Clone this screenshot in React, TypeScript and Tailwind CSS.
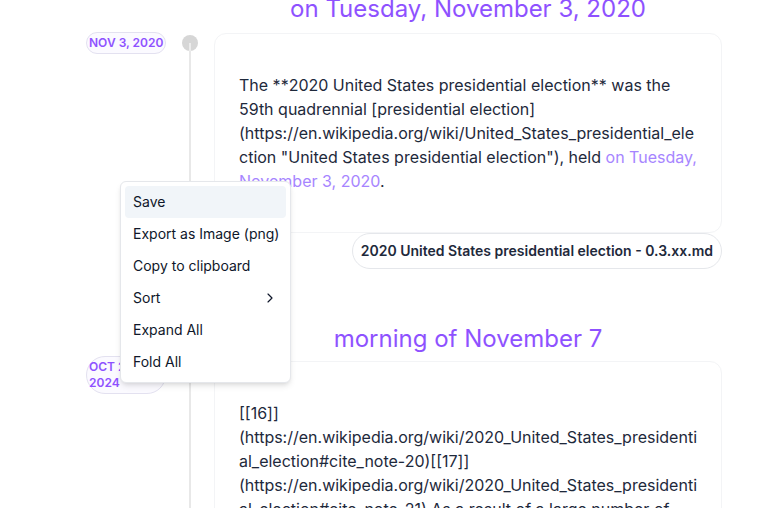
import React from "react";
import { ChevronRight } from "lucide-react";

const font = { fontFamily: "Inter, 'Noto Sans', sans-serif" };

const DateBadge = ({ label, nowrap, className = "" }: { label: string; nowrap?: boolean; className?: string }) => (
  <span
    className={`self-start rounded-full border border-[#e3e1f0] bg-[#fbfaff] px-[2px] py-0.5 text-xs leading-4 font-semibold text-violet-500 ${nowrap ? "whitespace-nowrap" : ""} ${className}`}
  >
    {label}
  </span>
);

const Dot = () => (
  <div className="flex flex-col items-center h-full">
    <div className="mt-[2px] w-4 h-4 rounded-full bg-[#d6d6d6] flex flex-col items-center">
      <div className="h-2" />
      <div className="w-0.5 h-2 bg-[#ececec]" />
    </div>
    <div className="flex-1 w-0.5 bg-[#e8e8e8]" />
  </div>
);

const Line = () => (
  <div className="flex justify-center h-full">
    <div className="w-0.5 h-full bg-[#e8e8e8]" />
  </div>
);

const menuItems = ["Save", "Export as Image (png)", "Copy to clipboard", "Sort", "Expand All", "Fold All"];

export default function App() {
  return (
    <div className="relative w-full h-[508px] overflow-hidden bg-white" style={font}>
      <div className="pl-[86px] pr-[45px] grid grid-cols-[80px_48px_minmax(0,1fr)]">
        {/* section 1 heading */}
        <div />
        <div />
        <h2 className="-mt-[7px] text-center text-2xl leading-8 text-violet-500">
          on Tuesday, November 3, 2020
        </h2>

        {/* entry 1 */}
        <div className="flex flex-col pt-2">
          <DateBadge label="NOV 3, 2020" nowrap className="-mt-px" />
        </div>
        <div className="pt-2 flex flex-col">
          <Dot />
        </div>
        <div className="pt-2 flex flex-col min-w-0">
          <div className="rounded-xl border border-[#f3f4f6] px-6 py-[39px] text-base leading-6 text-[#1e293b] break-words">
            The **2020 United States presidential election** was the 59th quadrennial [presidential election](https://en.wikipedia.org/wiki/United_States_presidential_election "United States presidential election"), held{" "}
            <span className="text-violet-400">on Tuesday, November 3, 2020</span>.
          </div>
          <span className="self-end h-9 flex items-center rounded-full border border-[#e5e7eb] px-2 text-sm font-semibold text-[#1e293b] whitespace-nowrap">
            2020 United States presidential election - 0.3.xx.md
          </span>
        </div>

        {/* section 2 heading */}
        <div />
        <Line />
        <h2 className="pt-[54px] pb-[6px] text-center text-2xl leading-8 text-violet-500">
          morning of November 7
        </h2>

        {/* entry 2 */}
        <div className="flex flex-col">
          <DateBadge label="OCT 28, 2024" className="-mt-[5px]" />
        </div>
        <div className="flex flex-col">
          <Dot />
        </div>
        <div className="flex flex-col min-w-0">
          <div className="rounded-xl border border-[#f3f4f6] px-6 py-[39px] text-base leading-6 text-[#1e293b] break-words">
            [[16]](https://en.wikipedia.org/wiki/2020_United_States_presidential_election#cite_note-20)[[17]](https://en.wikipedia.org/wiki/2020_United_States_presidential_election#cite_note-21) As a result of a large number of mail-in ballots, the counting process took several days.
          </div>
        </div>
      </div>

      {/* context menu */}
      <div className="absolute left-[120px] top-[181px] w-[171px] rounded-md border border-[#e5e7eb] bg-white p-1 shadow-md">
        {menuItems.map((item, i) => (
          <div
            key={item}
            className={`h-8 flex items-center justify-between rounded px-2 text-sm whitespace-nowrap text-[#0f172a] ${i === 0 ? "bg-[#f1f5f9]" : ""}`}
          >
            <span>{item}</span>
            {item === "Sort" && <ChevronRight size={16} strokeWidth={1.75} />}
          </div>
        ))}
      </div>
    </div>
  );
}
